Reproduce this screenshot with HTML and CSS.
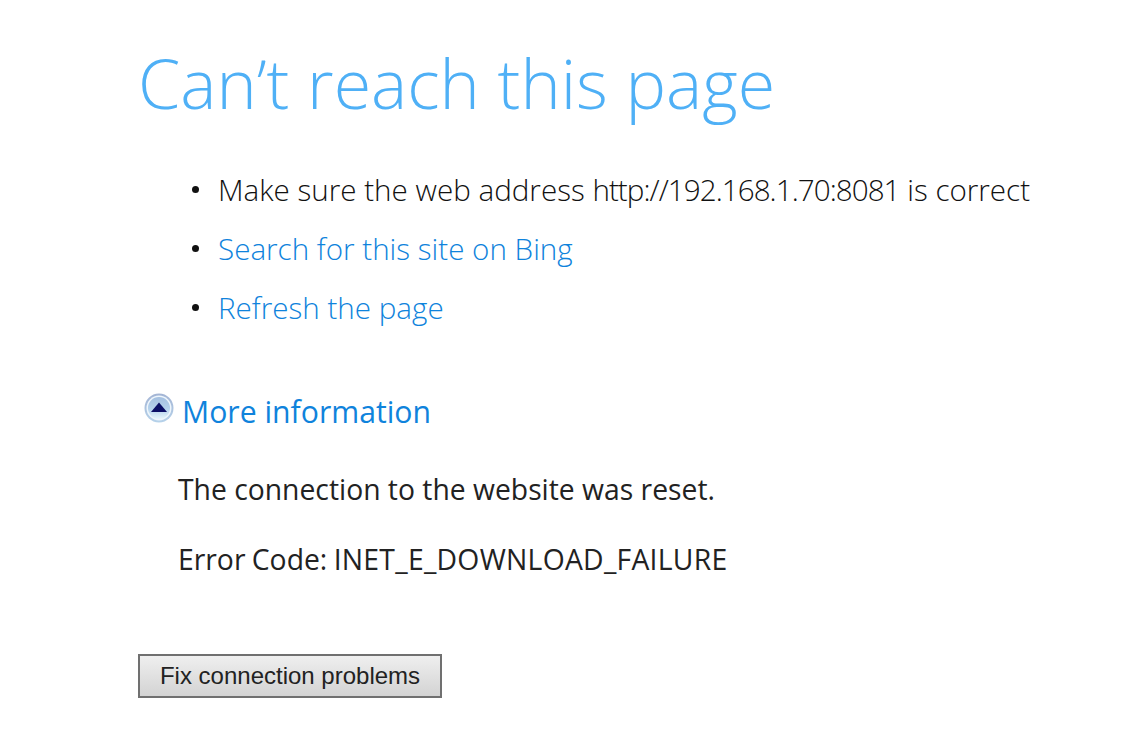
FILE: index.html
```html
<!DOCTYPE html>
<html lang="en">
<head>
<meta charset="utf-8">
<title>Can't reach this page</title>
<link rel="stylesheet" href="styles.css">
</head>
<body>
<main class="page">
  <h1 class="title">Can’t reach this page</h1>
  <ul class="tips">
    <li><span>Make sure the web address <span class="url">http://192.168.1.70:8081</span> is correct</span></li>
    <li><a href="#">Search for this site on Bing</a></li>
    <li><a href="#">Refresh the page</a></li>
  </ul>
  <div class="more">
    <svg class="more-icon" width="30" height="30" viewBox="0 0 30 30">
      <defs>
        <linearGradient id="g" x1="0" y1="0" x2="0" y2="1">
          <stop offset="0" stop-color="#a4bfe0"/>
          <stop offset="0.55" stop-color="#b4d2ec"/>
          <stop offset="1" stop-color="#e6f6fc"/>
        </linearGradient>
        <linearGradient id="r" x1="0" y1="0" x2="0" y2="1">
          <stop offset="0" stop-color="#a3b4d4"/>
          <stop offset="1" stop-color="#b6d2ea"/>
        </linearGradient>
      </defs>
      <circle cx="15" cy="15" r="14.5" fill="url(#r)"/>
      <circle cx="15" cy="15" r="12.5" fill="#eef6fc"/>
      <circle cx="15" cy="15" r="11" fill="url(#g)"/>
      <path d="M15 9.5 L23 19 H7 Z" fill="#0a0f66"/>
    </svg>
    <a href="#" class="more-link">More information</a>
  </div>
  <div class="details">
    <p>The connection to the website was reset.</p>
    <p class="error">Error Code: <span class="code">INET_E_DOWNLOAD_FAILURE</span></p>
  </div>
  <button class="fix">Fix connection problems</button>
</main>
</body>
</html>
```
FILE: styles.css
```css
html, body { margin: 0; padding: 0; background: #fff; }
body { font-family: "Open Sans", "Noto Sans", sans-serif; color: #1a1a1a; height: 740px; overflow: hidden; }
.page { padding: 33px 0 0 138px; }
.title { margin: 0; font-size: 68.2px; font-weight: 300; line-height: 100px; color: #4fb0f6; }
.tips { list-style: none; margin: 27px 0 0; padding: 0 0 0 54px; font-size: 29.6px; font-weight: 300; color: #111; }
.tips li { display: flex; align-items: center; line-height: 59px; }
.tips li::before { content: ""; flex: none; width: 7px; height: 7px; margin-right: 19px; border-radius: 50%; background: #111; }
.tips a { color: #0f83dc; text-decoration: none; }
.url { letter-spacing: -0.95px; }
.more { display: flex; align-items: center; gap: 8px; margin: 54px 0 0 6px; }
.more-icon { flex: none; margin-bottom: 8px; }
.more-link { color: #0f83dc; text-decoration: none; font-size: 30.2px; }
.details { margin: 37px 0 0 40px; font-size: 28.3px; color: #222; }
.details p { margin: 0 0 30px; line-height: 40px; }
.error { word-spacing: -1px; }
.code { letter-spacing: 0.27px; }
.fix { margin-top: 45px; width: 304px; height: 44px; font-family: "Liberation Sans", sans-serif; font-size: 24px; color: #222; background: linear-gradient(#efefef, #d3d3d3); border: 2px solid #707070; }
```
